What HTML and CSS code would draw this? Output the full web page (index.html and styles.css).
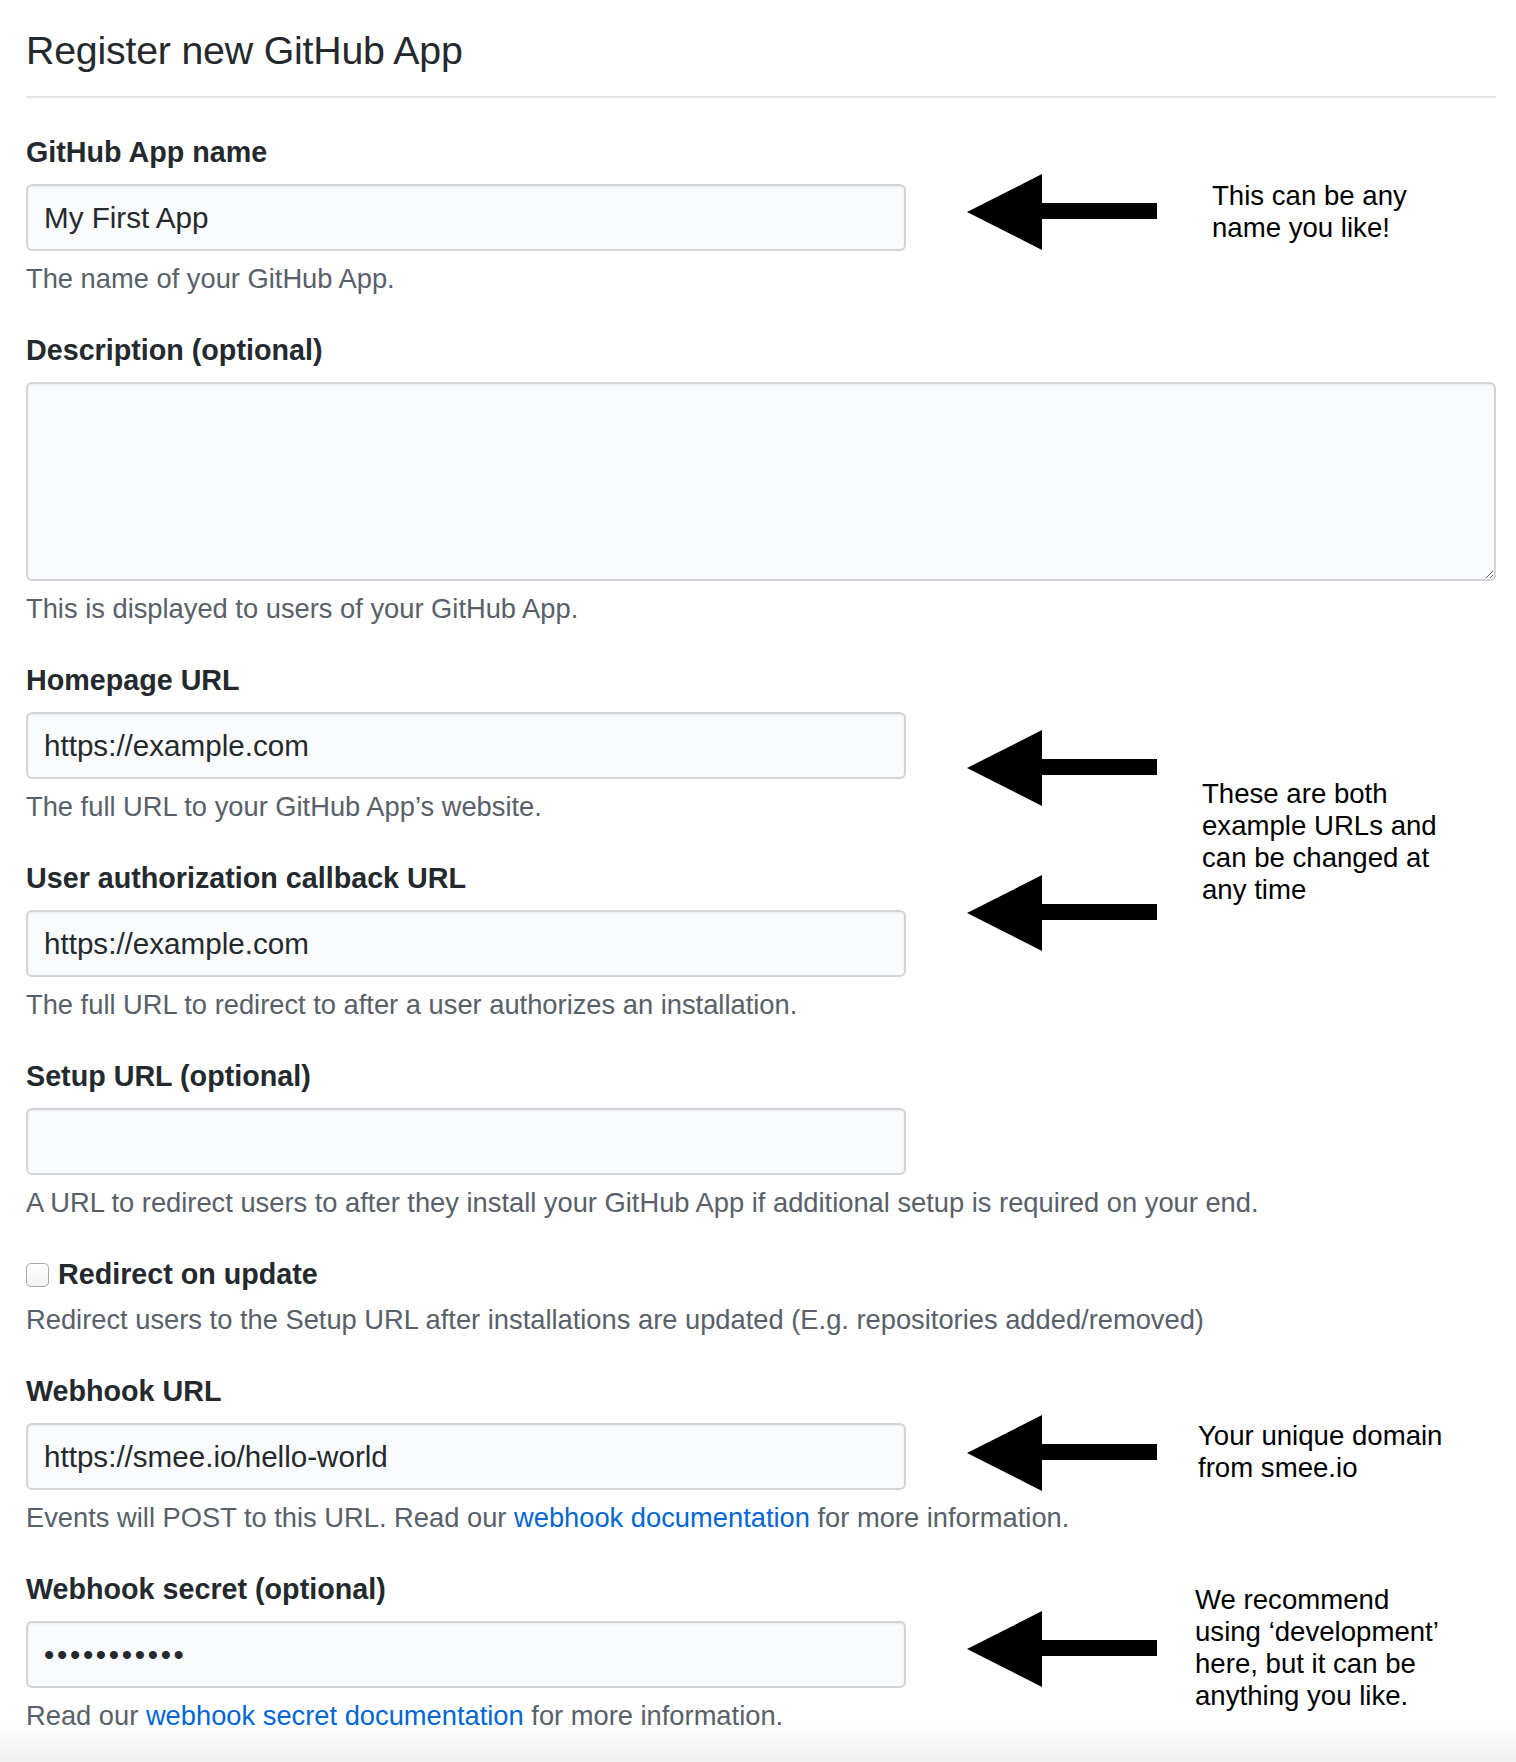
FILE: index.html
```html
<!DOCTYPE html>
<html lang="en">
<head>
<meta charset="utf-8">
<title>Register new GitHub App</title>
<link rel="stylesheet" href="styles.css">
</head>
<body>
<div class="page">
  <form class="form">
    <h1 class="subhead">Register new GitHub App</h1>

    <div class="field">
      <label class="label" for="name">GitHub App name</label>
      <input class="input" id="name" type="text" value="My First App">
      <p class="note">The name of your GitHub App.</p>
    </div>

    <div class="field">
      <label class="label" for="desc">Description (optional)</label>
      <textarea class="input textarea" id="desc"></textarea>
      <p class="note">This is displayed to users of your GitHub App.</p>
    </div>

    <div class="field">
      <label class="label" for="home">Homepage URL</label>
      <input class="input" id="home" type="text" value="https://example.com">
      <p class="note">The full URL to your GitHub App’s website.</p>
    </div>

    <div class="field">
      <label class="label" for="cb">User authorization callback URL</label>
      <input class="input" id="cb" type="text" value="https://example.com">
      <p class="note">The full URL to redirect to after a user authorizes an installation.</p>
    </div>

    <div class="field">
      <label class="label" for="setup">Setup URL (optional)</label>
      <input class="input" id="setup" type="text" value="">
      <p class="note">A URL to redirect users to after they install your GitHub App if additional setup is required on your end.</p>
    </div>

    <div class="field">
      <label class="check-row" for="redir">
        <input class="checkbox" id="redir" type="checkbox">
        <span class="label">Redirect on update</span>
      </label>
      <p class="note note-check">Redirect users to the Setup URL after installations are updated (E.g. repositories added/removed)</p>
    </div>

    <div class="field">
      <label class="label" for="hook">Webhook URL</label>
      <input class="input" id="hook" type="text" value="https://smee.io/hello-world">
      <p class="note">Events will POST to this URL. Read our <a class="link" href="#">webhook documentation</a> for more information.</p>
    </div>

    <div class="field">
      <label class="label" for="secret">Webhook secret (optional)</label>
      <input class="input password" id="secret" type="password" value="development">
      <p class="note">Read our <a class="link" href="#">webhook secret documentation</a> for more information.</p>
    </div>
  </form>

  <div class="annotations">
    <svg class="arrow arrow-1" viewBox="0 0 190 76" width="190" height="76"><polygon points="0,38 75,0 75,29 190,29 190,45 75,45 75,76"/></svg>
    <div class="annot annot-1">This can be any<br>name you like!</div>

    <svg class="arrow arrow-2" viewBox="0 0 190 76" width="190" height="76"><polygon points="0,38 75,0 75,29 190,29 190,45 75,45 75,76"/></svg>
    <svg class="arrow arrow-3" viewBox="0 0 190 76" width="190" height="76"><polygon points="0,38 75,0 75,29 190,29 190,45 75,45 75,76"/></svg>
    <div class="annot annot-2">These are both<br>example URLs and<br>can be changed at<br>any time</div>

    <svg class="arrow arrow-4" viewBox="0 0 190 76" width="190" height="76"><polygon points="0,38 75,0 75,29 190,29 190,45 75,45 75,76"/></svg>
    <div class="annot annot-3">Your unique domain<br>from smee.io</div>

    <svg class="arrow arrow-5" viewBox="0 0 190 76" width="190" height="76"><polygon points="0,38 75,0 75,29 190,29 190,45 75,45 75,76"/></svg>
    <div class="annot annot-4">We recommend<br>using ‘development’<br>here, but it can be<br>anything you like.</div>
  </div>
</div>
</body>
</html>
```

FILE: styles.css
```css
html {
  height: 1762px;
  background: linear-gradient(to bottom, #ffffff 0, #ffffff 1722px, #f1f1f1 1762px);
}

body {
  margin: 0;
  font-family: "Liberation Sans", Arial, sans-serif;
  color: #24292e;
}

.page {
  position: relative;
  padding: 26px 0 0 26px;
}

.form {
  width: 1470px;
  margin: 0;
}

.subhead {
  margin: 0 0 38px 0;
  padding-bottom: 22px;
  border-bottom: 2px solid #e1e4e8;
  font-size: 39.3px;
  line-height: 48px;
  font-weight: 400;
  color: #24292e;
  letter-spacing: -0.2px;
}

.field {
  margin-bottom: 39px;
}

.label {
  display: block;
  font-size: 28.7px;
  line-height: 32px;
  font-weight: 700;
  color: #24292e;
}

.input {
  display: block;
  box-sizing: border-box;
  width: 880px;
  height: 67px;
  margin: 16px 0 0 0;
  padding: 0 16px;
  border: 2px solid #d1d5da;
  border-radius: 6px;
  background: #fafbfc;
  box-shadow: inset 0 1px 2px rgba(27, 31, 35, 0.075);
  font-family: "Liberation Sans", Arial, sans-serif;
  font-size: 29.6px;
  color: #24292e;
  outline: none;
}

.textarea {
  width: 1470px;
  height: 199px;
  resize: vertical;
  padding: 12px 16px;
}

.password {
  letter-spacing: 2.6px;
}

.note {
  margin: 12px 0 0 0;
  font-size: 27.3px;
  line-height: 32px;
  color: #586069;
}

.note-check {
  margin-top: 14px;
}

.link {
  color: #0366d6;
  text-decoration: none;
}

.check-row {
  display: flex;
  align-items: center;
  gap: 9px;
  height: 32px;
}

.checkbox {
  appearance: none;
  -webkit-appearance: none;
  box-sizing: border-box;
  width: 23px;
  height: 24px;
  margin: 2px 0 0 0;
  border: 1.5px solid #a9a9a9;
  border-radius: 5px;
  background: linear-gradient(#ffffff, #f2f2f2);
}

.check-row .label {
  display: inline;
}

.annotations {
  position: absolute;
  left: 0;
  top: 0;
  width: 100%;
  height: 0;
}

.arrow {
  position: absolute;
  left: 967px;
  fill: #000;
}

.arrow-1 { top: 174px; }
.arrow-2 { top: 730px; }
.arrow-3 { top: 875px; }
.arrow-4 { top: 1415px; }
.arrow-5 { top: 1611px; }

.annot {
  position: absolute;
  font-family: "Liberation Sans", Arial, sans-serif;
  font-size: 27.6px;
  line-height: 32px;
  color: #000;
  white-space: nowrap;
}

.annot-1 { left: 1212px; top: 180px; line-height: 31.5px; }
.annot-2 { left: 1202px; top: 778px; }
.annot-3 { left: 1198px; top: 1420px; }
.annot-4 { left: 1195px; top: 1584px; }
```
